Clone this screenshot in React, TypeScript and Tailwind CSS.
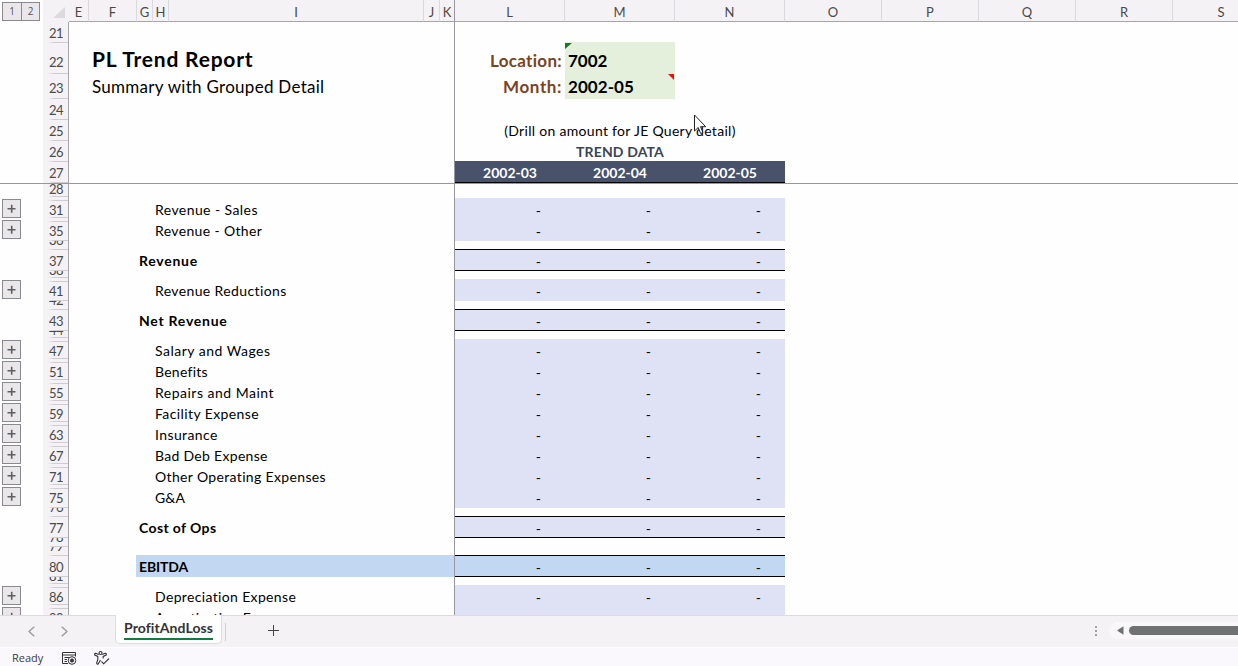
import React from "react";

type RowData = {
  n: string;
  h: string;
  label?: string;
  spacing?: string;
  kind?: "detail" | "total" | "ebitda";
  plus?: boolean;
  hiddenAbove?: boolean;
  hiddenBelow?: boolean;
};

const H = "h-[21px]";
const S = "h-[9px]";

const rows: RowData[] = [
  { n: "28", h: "h-[15px]", hiddenBelow: true },
  { n: "31", h: H, label: "Revenue - Sales", spacing: "tracking-[0.42px]", kind: "detail", plus: true, hiddenAbove: true, hiddenBelow: true },
  { n: "35", h: H, label: "Revenue - Other", spacing: "tracking-[0.36px]", kind: "detail", plus: true, hiddenAbove: true },
  { n: "36", h: S },
  { n: "37", h: H, label: "Revenue", spacing: "tracking-[0.75px]", kind: "total" },
  { n: "38", h: S, hiddenBelow: true },
  { n: "41", h: H, label: "Revenue Reductions", spacing: "tracking-[0.38px]", kind: "detail", plus: true, hiddenAbove: true },
  { n: "42", h: S },
  { n: "43", h: H, label: "Net Revenue", spacing: "tracking-[0.75px]", kind: "total" },
  { n: "44", h: S, hiddenBelow: true },
  { n: "47", h: H, label: "Salary and Wages", spacing: "tracking-[0.5px]", kind: "detail", plus: true, hiddenAbove: true, hiddenBelow: true },
  { n: "51", h: H, label: "Benefits", spacing: "tracking-[0.25px]", kind: "detail", plus: true, hiddenAbove: true, hiddenBelow: true },
  { n: "55", h: H, label: "Repairs and Maint", spacing: "tracking-[0.5px]", kind: "detail", plus: true, hiddenAbove: true, hiddenBelow: true },
  { n: "59", h: H, label: "Facility Expense", spacing: "tracking-[0.4px]", kind: "detail", plus: true, hiddenAbove: true, hiddenBelow: true },
  { n: "63", h: H, label: "Insurance", spacing: "tracking-[0.4px]", kind: "detail", plus: true, hiddenAbove: true, hiddenBelow: true },
  { n: "67", h: H, label: "Bad Deb Expense", spacing: "tracking-[0.3px]", kind: "detail", plus: true, hiddenAbove: true, hiddenBelow: true },
  { n: "71", h: H, label: "Other Operating Expenses", spacing: "tracking-[0.35px]", kind: "detail", plus: true, hiddenAbove: true, hiddenBelow: true },
  { n: "75", h: H, label: "G&A", spacing: "tracking-[0px]", kind: "detail", plus: true, hiddenAbove: true },
  { n: "76", h: S },
  { n: "77", h: H, label: "Cost of Ops", spacing: "tracking-[0.38px]", kind: "total" },
  { n: "78", h: S },
  { n: "79", h: S },
  { n: "80", h: H, label: "EBITDA", spacing: "tracking-[-0.15px]", kind: "ebitda" },
  { n: "81", h: S, hiddenBelow: true },
  { n: "86", h: H, label: "Depreciation Expense", spacing: "tracking-[0.35px]", kind: "detail", plus: true, hiddenAbove: true, hiddenBelow: true },
  { n: "90", h: H, label: "Amortization Expense", spacing: "tracking-[0.35px]", kind: "detail", plus: true, hiddenAbove: true },
];

const columns = [
  ["E", "w-[20px]"], ["F", "w-[48px]"], ["G", "w-[16px]"], ["H", "w-[16px]"],
  ["I", "w-[255px]"], ["J", "w-[16px]"], ["K", "w-[15px]"], ["L", "w-[110px]"],
  ["M", "w-[110px]"], ["N", "w-[110px]"], ["O", "w-[97px]"], ["P", "w-[97px]"],
  ["Q", "w-[97px]"], ["R", "w-[97px]"], ["S", "w-[97px]"],
];

function PlusButton() {
  return (
    <div className="ml-[2px] flex h-[19px] w-[19px] items-center justify-center border border-[#8b8990] bg-[#e9e7ea]">
      <svg width="9" height="9" viewBox="0 0 9 9">
        <path d="M.5 4.7h8M4.7 .7v8" stroke="#5f5f5f" strokeWidth="1.6" />
      </svg>
    </div>
  );
}

function HeaderLine({ className }: { className: string }) {
  return <span className={`absolute right-0 left-[5px] h-px bg-linear-to-r from-transparent to-[#cfccd0] to-30% ${className}`} />;
}

function RowNumber({ n, pad = "pb-[2px]", above, below }: { n: string; pad?: string; above?: boolean; below?: boolean }) {
  return (
    <div className={`relative flex w-[26px] shrink-0 items-end justify-end overflow-hidden border-r border-[#a7a5aa] bg-[#f4f2f5] pr-[5px] ${pad}`}>
      <span className="text-[13px] leading-[16px] tracking-[-0.6px] text-[#4a4a4a]">{n}</span>
      {above && <HeaderLine className="top-px" />}
      <HeaderLine className={below ? "bottom-[2px]" : "bottom-0"} />
    </div>
  );
}

function SheetRow({ n, h, pad, left, children }: { n: string; h: string; pad?: string; left?: React.ReactNode; children?: React.ReactNode }) {
  return (
    <div className={`flex shrink-0 ${h}`}>
      <div className="w-[43px] shrink-0" />
      <RowNumber n={n} pad={pad} />
      <div className="flex w-[386px] shrink-0 items-end border-r border-[#98969e] pl-[23px]">{left}</div>
      {children}
    </div>
  );
}

function DataRow({ row }: { row: RowData }) {
  const { kind } = row;
  const fill = kind === "ebitda" ? "bg-[#c2d8f2]" : "bg-[#dfe1f5]";
  const rules = kind === "detail" ? "" : "border-y border-black";
  return (
    <div className={`flex shrink-0 ${row.h}`}>
      <div className="w-[43px] shrink-0">{row.plus && <PlusButton />}</div>
      <RowNumber n={row.n} above={row.hiddenAbove} below={row.hiddenBelow} />
      <div className="-mt-px flex w-[386px] shrink-0 border-r border-[#98969e] pl-[67px]">
        {row.label && (
          <div
            className={`flex grow items-end pb-px text-[14px] leading-[18px] whitespace-nowrap text-black ${row.spacing ?? ""} ${
              kind === "detail" ? "pl-[19px]" : "pl-[3px] font-bold"
            } ${kind === "ebitda" ? "bg-[#c2d8f2]" : ""}`}
          >
            {row.label}
          </div>
        )}
      </div>
      {kind && (
        <div className={`-mt-px flex w-[330px] shrink-0 ${fill} ${rules}`}>
          {[0, 1, 2].map((i) => (
            <span
              key={i}
              className={`flex w-[110px] items-end justify-end pr-[24px] text-[14px] text-black ${kind === "detail" ? "leading-[18px]" : "leading-[16px]"}`}
            >
              -
            </span>
          ))}
        </div>
      )}
    </div>
  );
}

export default function App() {
  return (
    <div className="relative flex h-[666px] w-[1238px] flex-col overflow-hidden bg-[#fefefe] font-['Lato',sans-serif]">
      <div className="flex h-[22px] shrink-0">
        <div className="flex w-[43px] shrink-0 pt-[2px] pl-[2px] font-['Open_Sans',sans-serif] text-[10px] text-[#555]">
          <span className="flex h-[19px] w-[20px] items-center justify-center border border-[#8b8990] bg-[#e9e7ea]">1</span>
          <span className="-ml-px flex h-[19px] w-[19px] items-center justify-center border border-[#8b8990] bg-[#e9e7ea]">2</span>
        </div>
        <div className="flex w-[26px] shrink-0 items-end justify-end bg-[#f4f2f5] pr-[4px] pb-[4px]">
          <svg width="12" height="11" viewBox="0 0 12 11"><path d="M12 0v11H0z" fill="#dcdadd" /></svg>
        </div>
        {columns.map(([name, width]) => (
          <div
            key={name}
            className={`flex shrink-0 items-center justify-center border-r border-b border-b-[#a7a5aa] bg-[#f4f2f5] pt-[2px] text-[13px] leading-[16px] text-[#4a4a4a] ${width} ${
              name === "K" ? "border-r-[#98969e]" : "border-r-[#dbd9dd]"
            }`}
          >
            {name}
          </div>
        ))}
      </div>

      <SheetRow n="21" h="h-[21px]" />
      <SheetRow n="22" h="h-[31px]" pad="pb-[4px]" left={<span className="pb-[3px] text-[21px] leading-[24px] font-bold tracking-[0.8px] text-black">PL Trend Report</span>}>
        <div className="flex w-[110px] items-end justify-end pr-[3px] pb-[3px] text-[17px] leading-[20px] font-bold tracking-[0.3px] text-[#7b4420]">Location:</div>
        <div className="relative -mt-px flex w-[110px] items-end bg-[#e5f0dc] pb-[3px] pl-[3px] text-[17px] leading-[20px] font-bold text-black">
          7002
          <svg className="absolute top-px left-0" width="7" height="6"><path d="M0 0h7L0 6z" fill="#167a22" /></svg>
        </div>
      </SheetRow>
      <SheetRow n="23" h="h-[25px]" pad="pb-[3px]" left={<span className="pb-px text-[17px] leading-[22px] tracking-[0.28px] text-black">Summary with Grouped Detail</span>}>
        <div className="flex w-[110px] items-end justify-end pr-[3px] pb-[2px] text-[17px] leading-[20px] font-bold tracking-[0.6px] text-[#7b4420]">Month:</div>
        <div className="relative flex w-[110px] items-end bg-[#e5f0dc] pb-[2px] pl-[3px] text-[17px] leading-[20px] font-bold tracking-[0.05px] text-black">
          2002-05
          <svg className="absolute top-0 right-px" width="6" height="6"><path d="M0 0h6v6z" fill="#f00c12" /></svg>
        </div>
      </SheetRow>
      <SheetRow n="24" h="h-[21px]" />
      <SheetRow n="25" h="h-[21px]">
        <div className="flex w-[330px] items-end justify-center pb-px text-[14px] leading-[18px] tracking-[0.3px] text-black">(Drill on amount for JE Query detail)</div>
      </SheetRow>
      <SheetRow n="26" h="h-[21px]">
        <div className="flex w-[330px] items-end justify-center pb-px text-[14px] leading-[18px] font-bold tracking-[0.15px] text-[#3b4557]">TREND DATA</div>
      </SheetRow>
      <SheetRow n="27" h="h-[21px]">
        <div className="-mt-px flex w-[330px] border-b border-black bg-[#48526b] text-[14px] leading-[18px] font-bold text-white">
          {["2002-03", "2002-04", "2002-05"].map((m) => (
            <span key={m} className="flex w-[110px] items-end justify-center">{m}</span>
          ))}
        </div>
      </SheetRow>
      <div className="h-px shrink-0 bg-[#98969e]" />

      <div className="flex h-[431px] shrink-0 flex-col overflow-hidden">
        {rows.map((row) => (
          <DataRow key={row.n} row={row} />
        ))}
      </div>

      <div className="flex h-[32px] shrink-0 border-t border-[#dddbde] bg-[#f4f2f4]">
        <div className="flex w-[115px] items-center gap-[26px] pb-px pl-[28px]">
          <svg width="7" height="11" viewBox="0 0 7 11" fill="none" stroke="#9b9a9d" strokeWidth="1.4"><path d="M6.3 .8 1 5.5l5.3 4.7" /></svg>
          <svg width="7" height="11" viewBox="0 0 7 11" fill="none" stroke="#9b9a9d" strokeWidth="1.4"><path d="M.7 .8 6 5.5.7 10.2" /></svg>
        </div>
        <div className="-mt-px flex h-[29px] w-[107px] justify-center rounded-b-[5px] border border-t-0 border-[#dddbde] bg-[#fefefe]">
          <span className="flex h-[25px] items-end border-b-2 border-[#107c41] text-[14px] leading-[20px] font-bold tracking-[0.08px] text-[#333]">ProfitAndLoss</span>
        </div>
        <div className="mt-[7px] ml-[3px] h-[18px] w-px bg-[#d2d0d3]" />
        <svg className="mt-[9px] ml-[42px]" width="11" height="11" viewBox="0 0 11 11" shapeRendering="crispEdges"><path d="M0 5h11v1H0zM5 0h1v11H5z" fill="#444" /></svg>
        <div className="grow" />
        <div className="flex w-[144px] shrink-0 items-center pb-[2px]">
          <svg className="mr-[12px] ml-px shrink-0" width="2" height="10" viewBox="0 0 2 10" fill="#a09fa2"><path d="M0 0h2v2H0zM0 4h2v2H0zM0 8h2v2H0z" /></svg>
          <div className="mr-[-4px] flex h-[17px] grow items-center rounded-l-full bg-[#faf7fb] pl-[8px]">
            <svg width="7" height="9" viewBox="0 0 7 9"><path d="M6.5 .3v8.4L.6 5q-.6-.5 0-1z" fill="#707172" /></svg>
            <div className="ml-[5px] h-[9px] grow rounded-l-full bg-[#707172]" />
          </div>
        </div>
      </div>

      <div className="flex h-[19px] shrink-0 items-center border-t border-[#fefefe] bg-[#faf7fd] pl-[12px] font-['Open_Sans',sans-serif] text-[11px] text-[#3c3c3c]">
        <span className="w-[50px] pt-[3px]">Ready</span>
        <svg className="mt-[3px]" width="15" height="13" viewBox="0 0 15 13" fill="none" stroke="#333" strokeWidth="1">
          <path d="M6 11.5H.5V.5h13v4M.5 3h13M2.5 5.5H7M2.5 7.5H5M2.5 9.5H5" />
          <circle cx="10" cy="8.5" r="3.8" /><circle cx="10" cy="8.5" r="1.6" fill="#333" />
        </svg>
        <svg className="mt-[2px] ml-[17px]" width="16" height="14" viewBox="0 0 16 14" fill="none" stroke="#333" strokeWidth="1.1">
          <circle cx="6.5" cy="2" r="1.5" />
          <path d="M4.8 3.5 1.8 2.3Q.2 2.6.8 4l3 1.4v3.2L2.6 12q.2 1.4 1.6 1l2.3-4M8.2 3.5l3-1.2q1.6.3 1 1.7l-3 1.4v2M7.5 10.5l2.2 2.3L15 7.5" />
        </svg>
      </div>

      <svg className="absolute top-[114px] left-[694px]" width="13" height="21" viewBox="0 0 13 21">
        <path d="M.5 1v16l3.7-3.5 2.5 6 2.3-1-2.5-5.8h5.2z" fill="#fff" stroke="#222" strokeWidth="1" />
      </svg>
    </div>
  );
}
